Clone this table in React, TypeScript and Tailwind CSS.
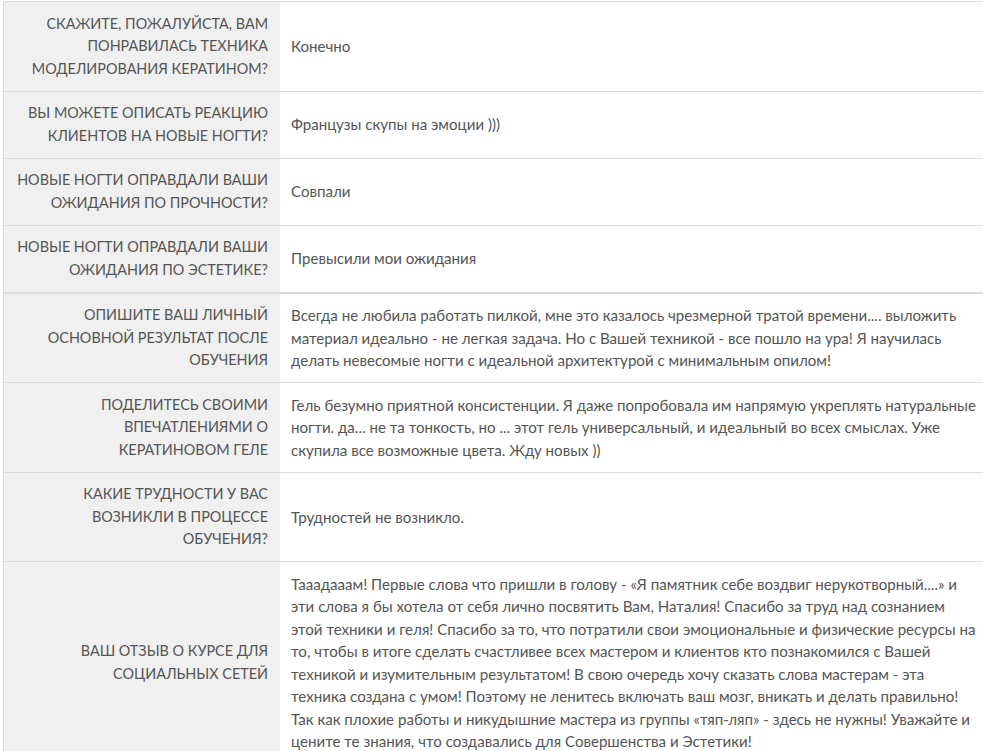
import React from 'react';

type Row = {
  q: string[];
  a: string[];
  thick?: boolean;
};

// строки разбиты так же, как в макете
const rows: Row[] = [
  {
    q: ['Скажите, пожалуйста, вам', 'понравилась техника', 'моделирования кератином?'],
    a: ['Конечно'],
  },
  {
    q: ['Вы можете описать реакцию', 'клиентов на новые ногти?'],
    a: ['Французы скупы на эмоции )))'],
  },
  {
    q: ['Новые ногти оправдали ваши', 'ожидания по прочности?'],
    a: ['Совпали'],
  },
  {
    q: ['Новые ногти оправдали ваши', 'ожидания по эстетике?'],
    a: ['Превысили мои ожидания'],
  },
  {
    q: ['Опишите ваш личный', 'основной результат после', 'обучения'],
    a: [
      'Всегда не любила работать пилкой, мне это казалось чрезмерной тратой времени.... выложить',
      'материал идеально - не легкая задача. Но с Вашей техникой - все пошло на ура! Я научилась',
      'делать невесомые ногти с идеальной архитектурой с минимальным опилом!',
    ],
    thick: true,
  },
  {
    q: ['Поделитесь своими', 'впечатлениями о', 'кератиновом геле'],
    a: [
      'Гель безумно приятной консистенции. Я даже попробовала им напрямую укреплять натуральные',
      'ногти. да... не та тонкость, но ... этот гель универсальный, и идеальный во всех смыслах. Уже',
      'скупила все возможные цвета. Жду новых ))',
    ],
  },
  {
    q: ['Какие трудности у вас', 'возникли в процессе', 'обучения?'],
    a: ['Трудностей не возникло.'],
  },
  {
    q: ['Ваш отзыв о курсе для', 'социальных сетей'],
    a: [
      'Тааадааам! Первые слова что пришли в голову - «Я памятник себе воздвиг нерукотворный....» и',
      'эти слова я бы хотела от себя лично посвятить Вам, Наталия! Спасибо за труд над сознанием',
      'этой техники и геля! Спасибо за то, что потратили свои эмоциональные и физические ресурсы на',
      'то, чтобы в итоге сделать счастливее всех мастером и клиентов кто познакомился с Вашей',
      'техникой и изумительным результатом! В свою очередь хочу сказать слова мастерам - эта',
      'техника создана с умом! Поэтому не ленитесь включать ваш мозг, вникать и делать правильно!',
      'Так как плохие работы и никудышние мастера из группы «тяп-ляп» - здесь не нужны! Уважайте и',
      'цените те знания, что создавались для Совершенства и Эстетики!',
    ],
  },
];

const Lines: React.FC<{ lines: string[] }> = ({ lines }) => (
  <>
    {lines.map((line, i) => (
      <span key={i} className="block whitespace-nowrap">
        {line}
      </span>
    ))}
  </>
);

const App: React.FC = () => {
  return (
    <div className="min-h-screen bg-white overflow-hidden pt-px">
      <div
        className="ml-[3px] w-[990px] border-l border-[#d9d9d9] leading-[22.5px] text-[#555555]"
        style={{ fontFamily: 'Lato, "Open Sans", sans-serif' }}
      >
        {rows.map((row, i) => (
          <div
            key={i}
            className={`flex ${row.thick ? 'border-t-2' : 'border-t'} border-[#dcdcdc]`}
          >
            {/* вопрос */}
            <div className="w-[276px] shrink-0 bg-[#f0f0f0] pl-1 pr-3 py-[10.5px] flex flex-col justify-center items-end text-right uppercase text-[14.4px]">
              <Lines lines={row.q} />
            </div>
            {/* ответ */}
            <div className="flex-1 pl-[11px] pr-[6px] py-[10.5px] flex flex-col justify-center text-[15.1px]">
              <Lines lines={row.a} />
            </div>
          </div>
        ))}
      </div>
    </div>
  );
};

export default App;
